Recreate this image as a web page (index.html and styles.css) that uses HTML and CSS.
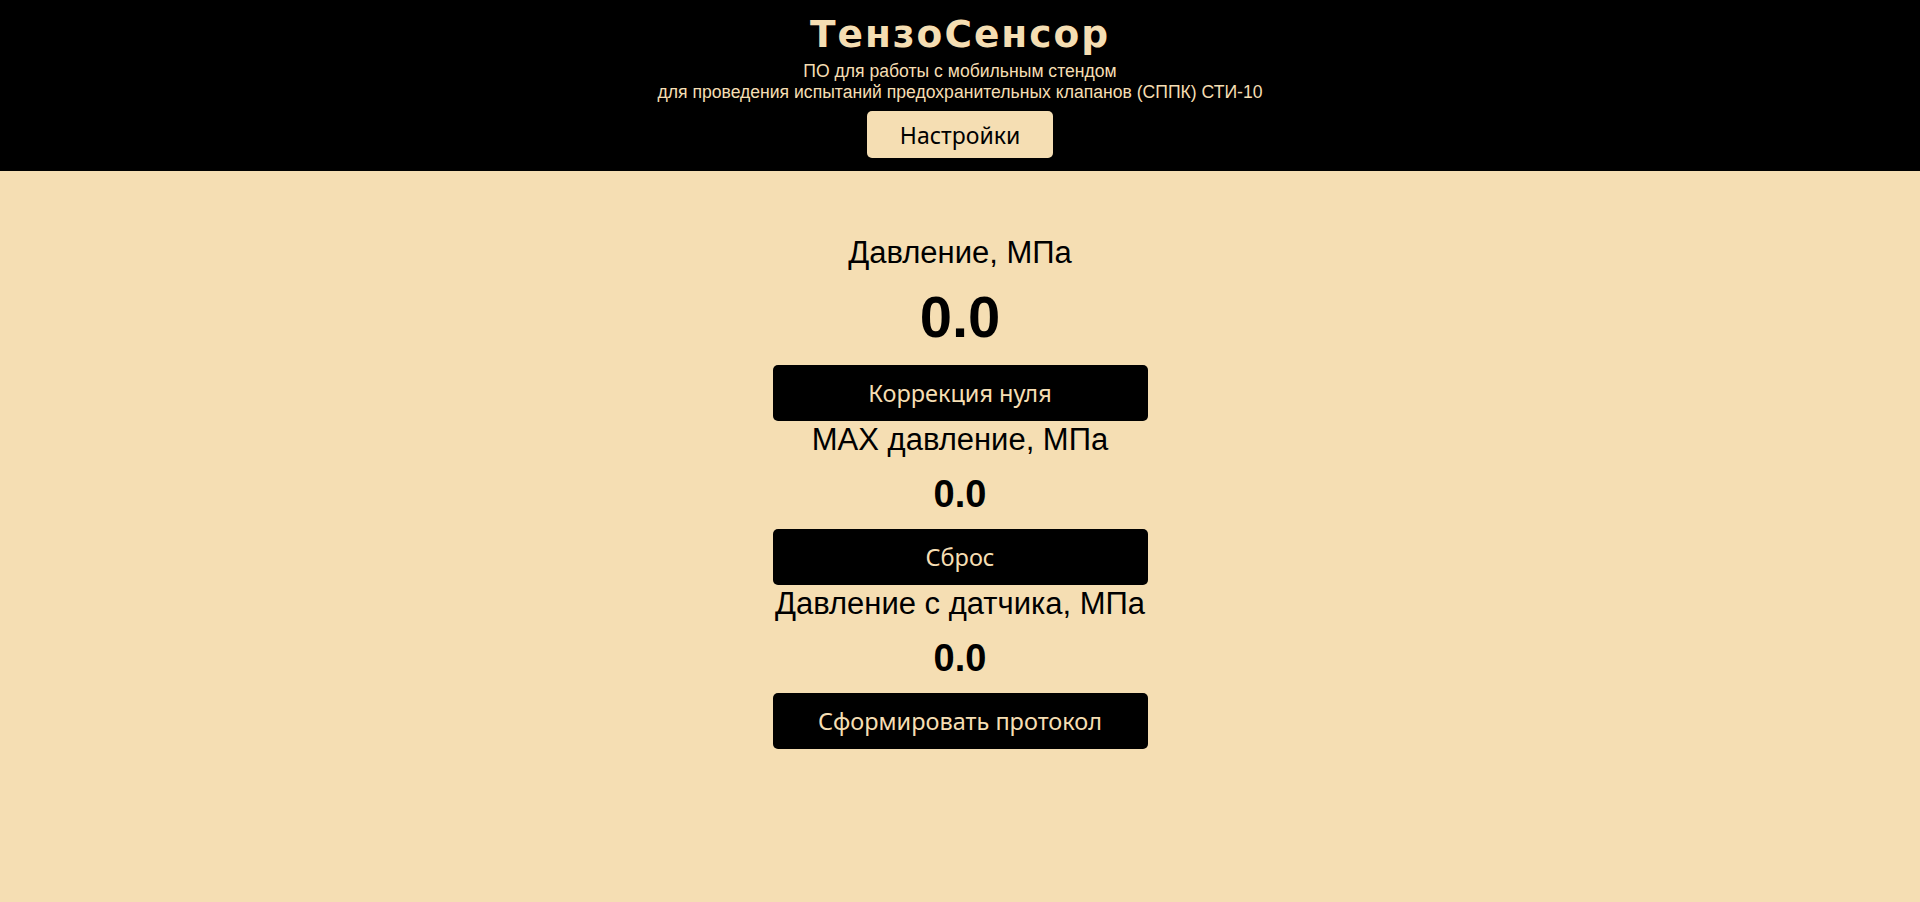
FILE: index.html
```html
<!DOCTYPE html>
<html lang="ru">
<head>
<meta charset="utf-8">
<title>ТензоСенсор</title>
<link rel="stylesheet" href="styles.css">
</head>
<body>
<header class="header">
  <h1 class="title">ТензоСенсор</h1>
  <p class="subtitle">ПО для работы с мобильным стендом<br>для проведения испытаний предохранительных клапанов (СППК) СТИ-10</p>
  <button class="settings-btn">Настройки</button>
</header>
<main class="main">
  <section class="block">
    <div class="label">Давление, МПа</div>
    <div class="value value-big">0.0</div>
    <button class="action-btn">Коррекция нуля</button>
  </section>
  <section class="block">
    <div class="label">MAX давление, МПа</div>
    <div class="value">0.0</div>
    <button class="action-btn">Сброс</button>
  </section>
  <section class="block">
    <div class="label">Давление с датчика, МПа</div>
    <div class="value">0.0</div>
    <button class="action-btn">Сформировать протокол</button>
  </section>
</main>
</body>
</html>
```
FILE: styles.css
```css
html, body {
  margin: 0;
  padding: 0;
  height: 100%;
}
body {
  background: #f5deb3;
  font-family: "Liberation Sans", Arial, sans-serif;
  color: #000;
}
.header {
  background: #000;
  height: 171px;
  box-sizing: border-box;
  display: flex;
  flex-direction: column;
  align-items: center;
  padding-top: 12px;
}
.title {
  margin: 0;
  font-family: "DejaVu Sans", "Liberation Sans", sans-serif;
  font-size: 37.5px;
  line-height: 44px;
  font-weight: bold;
  letter-spacing: 2px;
  color: #f5deb3;
}
.subtitle {
  margin: 5px 0 0;
  font-size: 17.6px;
  line-height: 21px;
  color: #f5deb3;
  text-align: center;
}
.settings-btn {
  margin-top: 8px;
  width: 186px;
  height: 47px;
  border: none;
  border-radius: 5px;
  background: #f5deb3;
  color: #000;
  font-family: "Noto Sans", "Open Sans", sans-serif;
  font-size: 23px;
  padding: 0;
  cursor: pointer;
}
.main {
  display: flex;
  flex-direction: column;
  align-items: center;
  padding-top: 64px;
}
.block {
  display: flex;
  flex-direction: column;
  align-items: center;
  width: 375px;
}
.block + .block {
  margin-top: 1px;
}
.label {
  font-size: 31px;
  line-height: 36px;
  white-space: nowrap;
}
.value {
  font-weight: bold;
  font-size: 38px;
  line-height: 44px;
  margin-top: 14px;
  margin-bottom: 13px;
}
.value-big {
  font-size: 58px;
  line-height: 67px;
  margin-top: 12px;
  margin-bottom: 15px;
}
.action-btn {
  width: 375px;
  height: 56px;
  border: none;
  border-radius: 5px;
  background: #000;
  color: #f5deb3;
  font-family: "Noto Sans", "Open Sans", sans-serif;
  font-size: 23.5px;
  padding: 0;
  cursor: pointer;
}
```
